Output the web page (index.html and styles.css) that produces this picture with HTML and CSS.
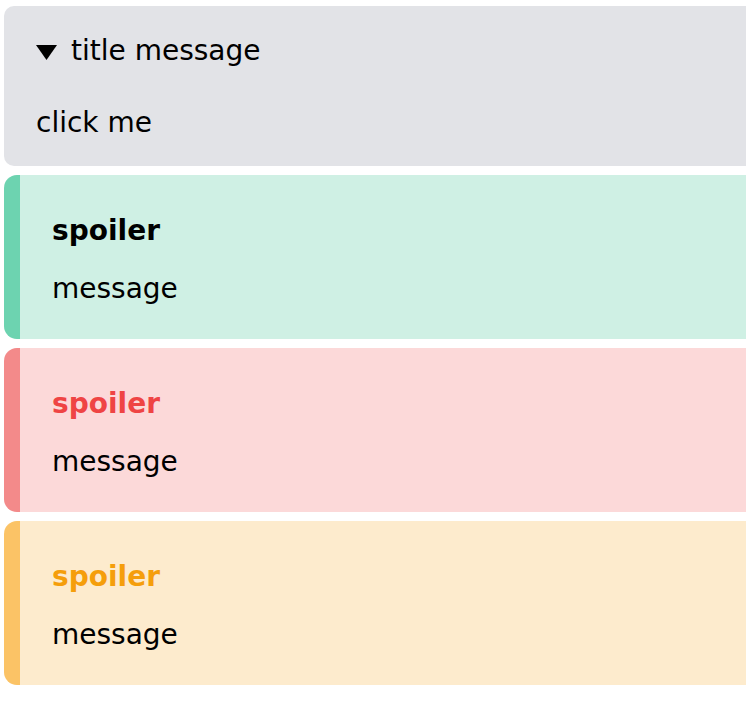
FILE: index.html
```html
<!DOCTYPE html>
<html>
<head>
<meta charset="utf-8">
<link rel="stylesheet" href="styles.css">
</head>
<body>
<div class="stack">
  <div class="details">
    <div class="summary"><svg class="marker" width="21" height="15" viewBox="0 0 21 15"><polygon points="0,0 21,0 10.5,15" fill="#000"/></svg><span>title message</span></div>
    <div class="body">click me</div>
  </div>
  <div class="spoiler green">
    <div class="title">spoiler</div>
    <div class="msg">message</div>
  </div>
  <div class="spoiler red">
    <div class="title">spoiler</div>
    <div class="msg">message</div>
  </div>
  <div class="spoiler amber">
    <div class="title">spoiler</div>
    <div class="msg">message</div>
  </div>
</div>
</body>
</html>
```
FILE: styles.css
```css
html { overflow: hidden; }
body {
  margin: 0;
  padding: 6px 0 0 4px;
  font-family: "DejaVu Sans", sans-serif;
  font-size: 28px;
  line-height: 42px;
  color: #000;
  background: #fff;
}
.stack {
  display: flex;
  flex-direction: column;
  gap: 9px;
  margin-right: -30px;
}
.details {
  background: #e2e3e7;
  border-radius: 10px;
  padding: 24px 32px 22px 32px;
  display: flex;
  flex-direction: column;
  gap: 30px;
}
.summary {
  display: flex;
  align-items: center;
  gap: 14px;
}
.marker { flex: none; margin-top: 3px; }
.spoiler {
  border-radius: 13px;
  border-left: 16px solid;
  padding: 35px 32px 29px 32px;
  display: flex;
  flex-direction: column;
  gap: 16px;
}
.title { font-weight: bold; }
.green { background: #cff0e4; border-left-color: #6dd3b0; }
.red { background: #fcd9d9; border-left-color: #f38a8a; }
.red .title { color: #ef4444; }
.amber { background: #fdebcd; border-left-color: #fbc366; }
.amber .title { color: #f59e0b; }
```
